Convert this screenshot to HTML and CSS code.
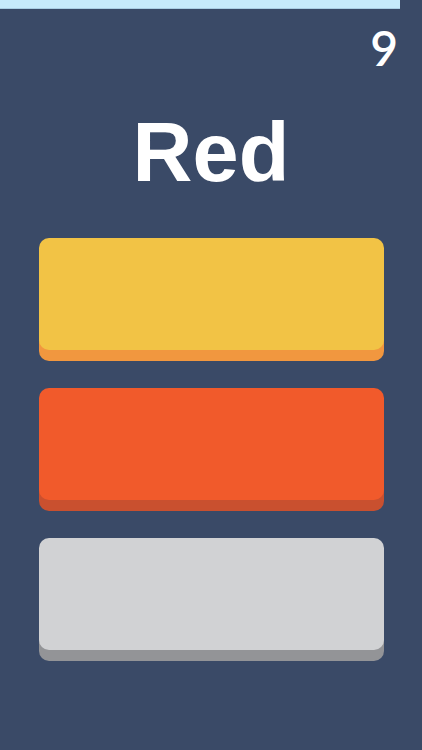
FILE: index.html
```html
<!DOCTYPE html>
<html>
<head>
<meta charset="utf-8">
<link rel="stylesheet" href="styles.css">
</head>
<body>
<div class="screen">
  <div class="progress"><div class="progress-fill" style="width: 400px"></div></div>
  <div class="score">9</div>
  <div class="word">Red</div>
  <div class="choices">
    <div class="choice yellow"></div>
    <div class="choice red"></div>
    <div class="choice gray"></div>
  </div>
</div>
</body>
</html>
```
FILE: styles.css
```css
html, body {
  margin: 0;
  padding: 0;
  background: #3a4a67;
}
.screen {
  width: 422px;
  height: 750px;
  display: flex;
  flex-direction: column;
  overflow: hidden;
}
.progress {
  height: 9px;
}
.progress-fill {
  height: 8px;
  background: #c6eafb;
  border-bottom: 1px solid #a9cde3;
}
.score {
  align-self: flex-end;
  margin: 15px 24px 0 0;
  font-family: "Lato", sans-serif;
  font-weight: 600;
  font-size: 48px;
  line-height: 48px;
  color: #ffffff;
}
.word {
  margin-top: 33px;
  text-align: center;
  font-family: "Liberation Sans", Arial, sans-serif;
  font-weight: 700;
  font-size: 83px;
  line-height: 96px;
  color: #ffffff;
}
.choices {
  margin: 37px 38px 0 39px;
  display: flex;
  flex-direction: column;
  gap: 38px;
}
.choice {
  height: 112px;
  border-radius: 10px;
}
.yellow {
  background: #f2c345;
  box-shadow: 0 11px 0 #f1973f;
}
.red {
  background: #f15a2b;
  box-shadow: 0 11px 0 #c9502f;
}
.gray {
  background: #d1d2d4;
  box-shadow: 0 11px 0 #939497;
}
```
